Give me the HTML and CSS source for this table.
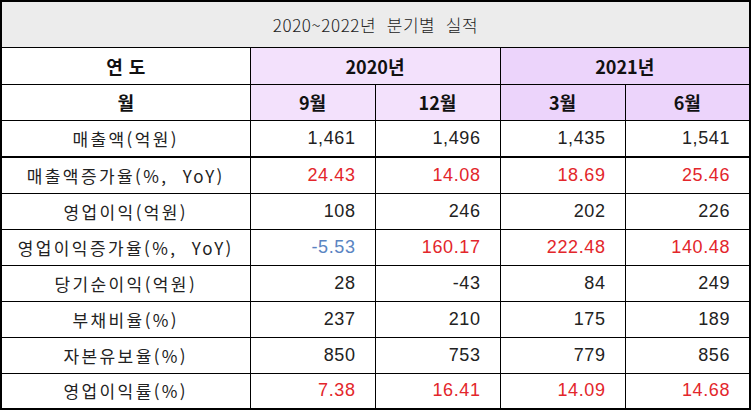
FILE: index.html
```html
<!DOCTYPE html>
<html lang="ko">
<head>
<meta charset="utf-8">
<title>2020~2022년 분기별 실적</title>
<link rel="stylesheet" href="styles.css">
</head>
<body>
<table class="perf">
  <colgroup>
    <col class="c-label">
    <col class="c-val"><col class="c-val"><col class="c-val"><col class="c-val">
  </colgroup>
  <tr class="r-title"><td colspan="5" class="title">2020~2022년 분기별 실적</td></tr>
  <tr class="r-head">
    <th class="h-label spaced">연도</th>
    <th colspan="2" class="y2020">2020년</th>
    <th colspan="2" class="y2021">2021년</th>
  </tr>
  <tr class="r-head2">
    <th class="h-label">월</th>
    <th class="y2020">9월</th>
    <th class="y2020">12월</th>
    <th class="y2021">3월</th>
    <th class="y2021">6월</th>
  </tr>
  <tr class="r-data first"><td class="label">매출액(억원)</td><td class="num">1,461</td><td class="num">1,496</td><td class="num">1,435</td><td class="num">1,541</td></tr>
  <tr class="r-data thick"><td class="label">매출액증가율(%,&nbsp; YoY)</td><td class="num red">24.43</td><td class="num red">14.08</td><td class="num red">18.69</td><td class="num red">25.46</td></tr>
  <tr class="r-data"><td class="label">영업이익(억원)</td><td class="num">108</td><td class="num">246</td><td class="num">202</td><td class="num">226</td></tr>
  <tr class="r-data"><td class="label">영업이익증가율(%,&nbsp; YoY)</td><td class="num blue">-5.53</td><td class="num red">160.17</td><td class="num red">222.48</td><td class="num red">140.48</td></tr>
  <tr class="r-data"><td class="label">당기순이익(억원)</td><td class="num">28</td><td class="num">-43</td><td class="num">84</td><td class="num">249</td></tr>
  <tr class="r-data"><td class="label">부채비율(%)</td><td class="num">237</td><td class="num">210</td><td class="num">175</td><td class="num">189</td></tr>
  <tr class="r-data"><td class="label">자본유보율(%)</td><td class="num">850</td><td class="num">753</td><td class="num">779</td><td class="num">856</td></tr>
  <tr class="r-data"><td class="label">영업이익률(%)</td><td class="num red">7.38</td><td class="num red">16.41</td><td class="num red">14.09</td><td class="num red">14.68</td></tr>
</table>
</body>
</html>
```
FILE: styles.css
```css
html, body {
  margin: 0;
  padding: 0;
  background: #ffffff;
}
body {
  font-family: "Noto Sans CJK KR", "Liberation Sans", sans-serif;
  color: #111111;
}
.perf {
  border-collapse: collapse;
  table-layout: fixed;
  width: 750px;
  border: 2px solid #000;
}
.c-label { width: 249px; }
.c-val { width: 125px; }
.perf td, .perf th {
  border: 1px solid #000;
  padding: 0;
  vertical-align: middle;
}
.r-title { height: 46px; }
.title {
  background: #ececec;
  text-align: center;
  font-size: 17px;
  font-weight: 300;
  color: #222;
  letter-spacing: 0.6px;
  word-spacing: 5px;
  padding-top: 1px;
}
.r-head { height: 37px; }
.r-head2 { height: 36px; }
.perf th {
  font-size: 18px;
  font-weight: 700;
  text-align: center;
  color: #111;
}
.h-label { background: #ffffff; }
.spaced { letter-spacing: 6px; text-indent: 6px; }
.y2020 { background: #f3e1fc; }
.y2021 { background: #ecd4fb; }
.r-data { height: 36px; }
.r-data.first { height: 37px; }
.r-data.thick td { border-top: 2px solid #000; }
.label {
  text-align: center;
  font-size: 17px;
  letter-spacing: 2.4px;
  font-weight: 400;
  color: #222;
}
.num {
  text-align: right;
  padding-right: 19px !important;
  font-family: "Liberation Sans", "Noto Sans CJK KR", sans-serif;
  font-size: 18px;
  letter-spacing: 0.6px;
  color: #222;
}
.red { color: #e3262b; }
.blue { color: #5a84c2; }
```
